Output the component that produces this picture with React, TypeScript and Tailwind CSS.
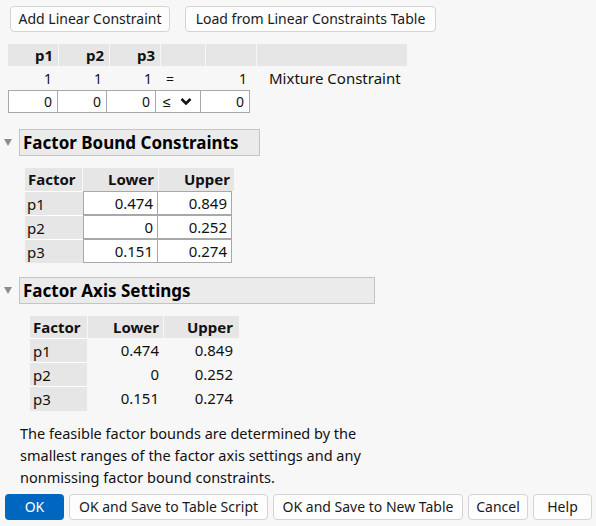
import React from 'react';

const font = { fontFamily: '"Noto Sans", "Liberation Sans", sans-serif' };

const Btn: React.FC<{ children: React.ReactNode; className?: string }> = ({ children, className }) => (
  <button
    className={`h-[26px] px-[6px] rounded-[4px] border border-[#d4d4d4] bg-[#fdfdfd] text-[14px] text-[#1a1a1a] leading-none whitespace-nowrap ${className ?? ''}`}
  >
    {children}
  </button>
);

const SectionHead: React.FC<{ title: string; width: string }> = ({ title, width }) => (
  <div className="flex items-center">
    <div className="w-[19px] flex justify-center pr-[3px]">
      <div className="w-0 h-0 border-l-[4px] border-r-[4px] border-t-[7px] border-l-transparent border-r-transparent border-t-[#8c8c8c]" />
    </div>
    <div className={`${width} h-[27px] bg-[#ebebeb] border border-[#c4c4c4] pl-[3px] flex items-center text-[17px] font-bold text-black`}>
      {title}
    </div>
  </div>
);

const bounds = [
  { f: 'p1', lo: '0.474', hi: '0.849' },
  { f: 'p2', lo: '0', hi: '0.252' },
  { f: 'p3', lo: '0.151', hi: '0.274' },
];

const App: React.FC = () => {
  return (
    <div className="w-[596px] h-[526px] bg-[#f7f7f7] text-[14px] text-[#111] overflow-hidden" style={font}>
      {/* Top buttons */}
      <div className="flex gap-[15px] pl-[10px] pt-[6px]">
        <Btn className="w-[160px]">Add Linear Constraint</Btn>
        <Btn className="w-[251px]">Load from Linear Constraints Table</Btn>
      </div>

      {/* Linear constraints table */}
      <div className="ml-[8px] mt-[12px]">
        <div className="grid grid-cols-[50px_50px_50px_44px_50px_150px] gap-x-[1px] h-[22px] text-[15px] font-bold">
          <div className="bg-[#e6e6e6] text-right pr-[5px] leading-[22px]">p1</div>
          <div className="bg-[#e6e6e6] text-right pr-[5px] leading-[22px]">p2</div>
          <div className="bg-[#e6e6e6] text-right pr-[5px] leading-[22px]">p3</div>
          <div className="bg-[#e6e6e6]" />
          <div className="bg-[#e6e6e6]" />
          <div className="bg-[#e6e6e6]" />
        </div>
        <div className="grid grid-cols-[50px_50px_50px_45px_50px_150px] h-[24px] items-center">
          <div className="text-right pr-[6px]">1</div>
          <div className="text-right pr-[6px]">1</div>
          <div className="text-right pr-[6px]">1</div>
          <div className="pl-[8px]">=</div>
          <div className="text-right pr-[6px]">1</div>
          <div className="pl-[16px] text-[15px]">Mixture Constraint</div>
        </div>
        <div className="flex h-[23px]">
          {['0', '0', '0'].map((v, i) => (
            <div key={i} className="w-[50px] bg-white border border-[#a8a8a8] -mr-[1px] text-right pr-[5px] leading-[21px]">
              {v}
            </div>
          ))}
          <div className="w-[46px] bg-white border border-[#a8a8a8] -mr-[1px] flex items-center pl-[7px] gap-[9px]">
            <span>≤</span>
            <svg width="12" height="9" viewBox="0 0 12 9">
              <path d="M1.5 2 L6 6.5 L10.5 2" fill="none" stroke="#111" strokeWidth="2.6" />
            </svg>
          </div>
          <div className="w-[50px] bg-white border border-[#a8a8a8] text-right pr-[5px] leading-[21px]">0</div>
        </div>
      </div>

      {/* Factor Bound Constraints */}
      <div className="mt-[16px]">
        <SectionHead title="Factor Bound Constraints" width="w-[241px]" />
        <div className="ml-[25px] mt-[12px] w-[207px]">
          <div className="grid grid-cols-[57px_75px_75px] gap-x-[1px] h-[23px] font-bold text-[15px]">
            <div className="bg-[#e6e6e6] pl-[3px] leading-[23px]">Factor</div>
            <div className="bg-[#e6e6e6] text-right pr-[4px] leading-[23px]">Lower</div>
            <div className="bg-[#e6e6e6] text-right pr-[4px] leading-[23px]">Upper</div>
          </div>
          {bounds.map((r) => (
            <div key={r.f} className="flex h-[24px]">
              <div className="w-[58px] bg-[#e6e6e6] pl-[2px] leading-[24px] border-t border-white text-[15px]">{r.f}</div>
              <div className="w-[75px] bg-white border border-[#a8a8a8] -mr-[1px] text-right pr-[4px] leading-[22px] text-[15px]">{r.lo}</div>
              <div className="w-[75px] bg-white border border-[#a8a8a8] text-right pr-[4px] leading-[22px] text-[15px]">{r.hi}</div>
            </div>
          ))}
        </div>
      </div>

      {/* Factor Axis Settings */}
      <div className="mt-[14px]">
        <SectionHead title="Factor Axis Settings" width="w-[356px]" />
        <div className="ml-[30px] mt-[12px] w-[207px] text-[15px]">
          <div className="grid grid-cols-[57px_75px_75px] gap-x-[1px] h-[22px] font-bold">
            <div className="bg-[#e6e6e6] pl-[3px] leading-[22px]">Factor</div>
            <div className="bg-[#e6e6e6] text-right pr-[4px] leading-[22px]">Lower</div>
            <div className="bg-[#e6e6e6] text-right pr-[6px] leading-[22px]">Upper</div>
          </div>
          {bounds.map((r) => (
            <div key={r.f} className="grid grid-cols-[57px_75px_75px] gap-x-[1px] h-[24px] leading-[24px]">
              <div className="bg-[#e6e6e6] pl-[3px] border-t border-white">{r.f}</div>
              <div className="text-right pr-[4px]">{r.lo}</div>
              <div className="text-right pr-[6px]">{r.hi}</div>
            </div>
          ))}
        </div>
      </div>

      {/* Note */}
      <p className="ml-[20px] mt-[12px] leading-[22px] text-[14.5px] text-[#111] whitespace-nowrap">
        The feasible factor bounds are determined by the
        <br />
        smallest ranges of the factor axis settings and any
        <br />
        nonmissing factor bound constraints.
      </p>

      {/* Bottom buttons */}
      <div className="flex gap-[5px] pl-[5px] mt-[6px]">
        <button className="h-[26px] w-[59px] rounded-[4px] bg-[#0067c0] text-white text-[14px] leading-none">OK</button>
        <Btn className="w-[199px]">OK and Save to Table Script</Btn>
        <Btn className="w-[190px]">OK and Save to New Table</Btn>
        <Btn className="w-[60px]">Cancel</Btn>
        <Btn className="w-[59px]">Help</Btn>
      </div>
    </div>
  );
};

export default App;
